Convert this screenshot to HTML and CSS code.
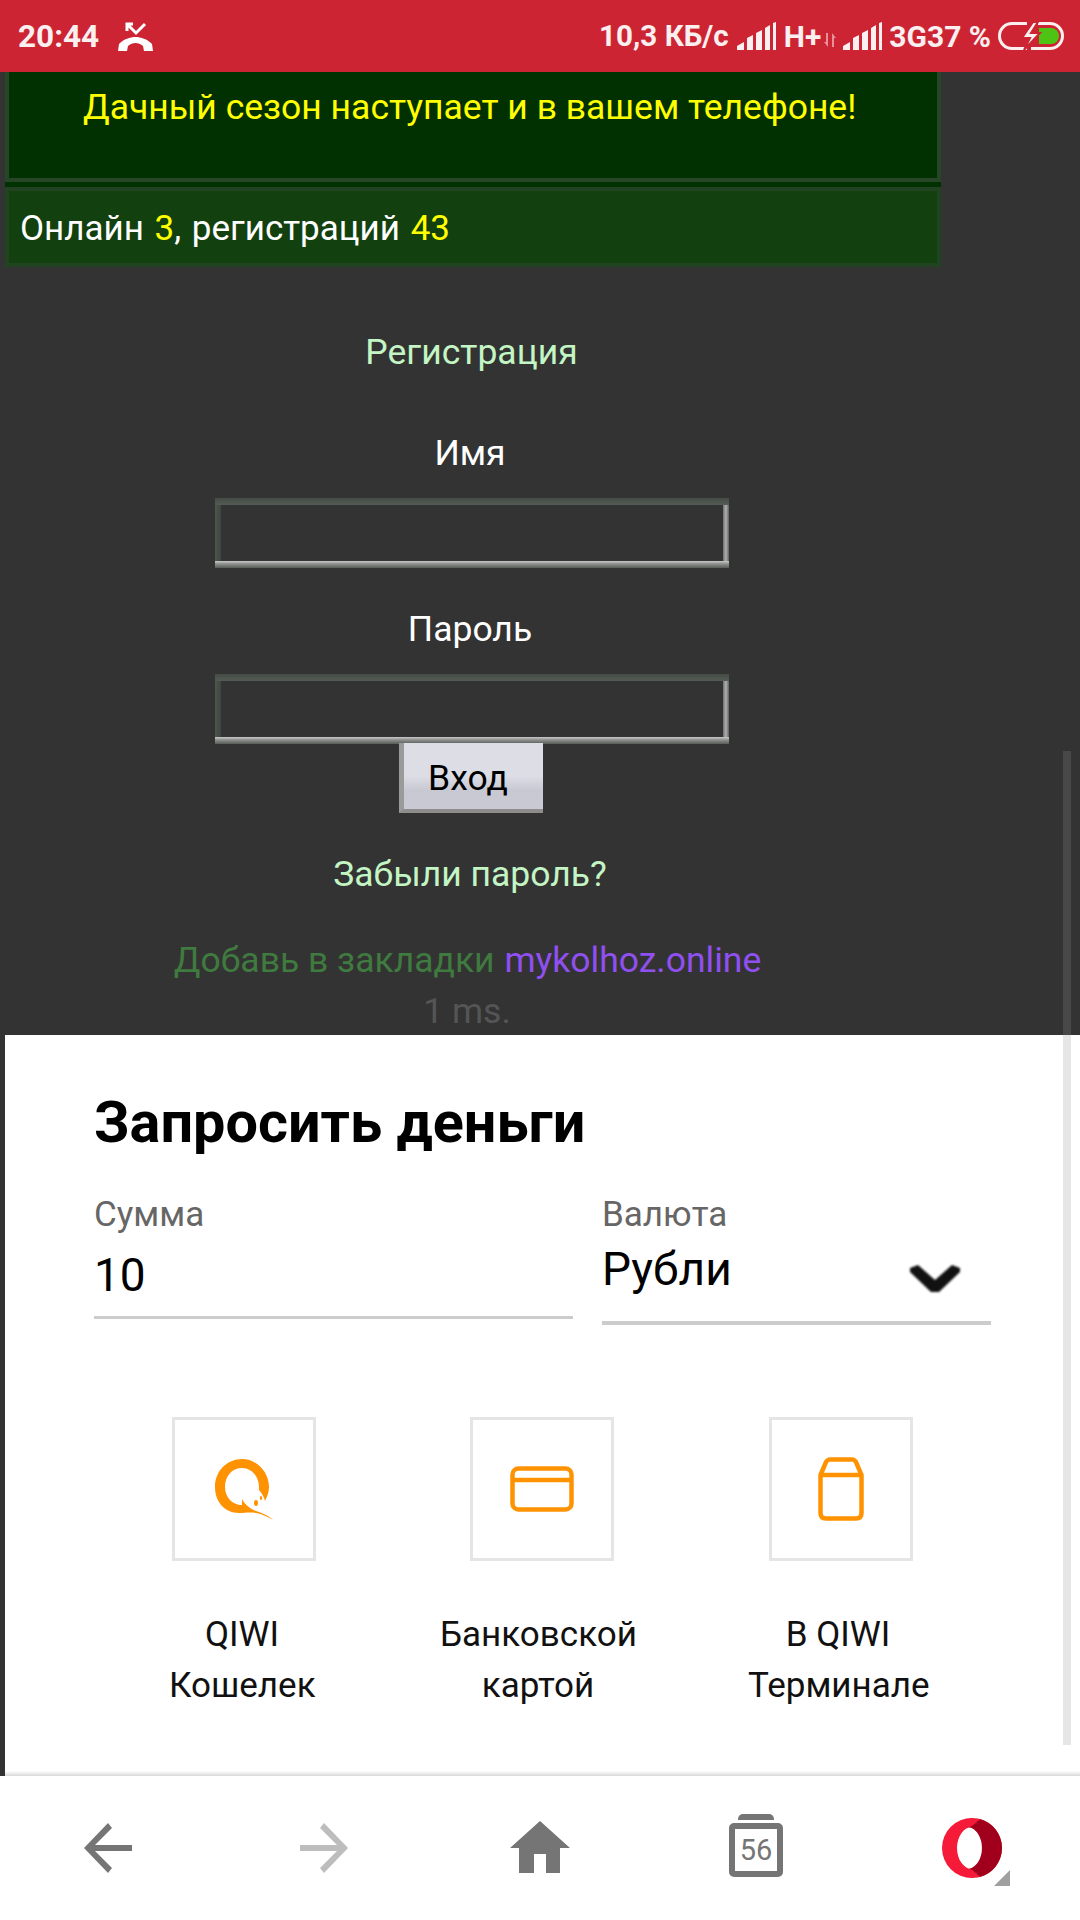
FILE: index.html
```html
<!DOCTYPE html>
<html lang="ru">
<head>
<meta charset="utf-8">
<title>Запросить деньги</title>
<link rel="stylesheet" href="styles.css">
</head>
<body>
<div class="screen">
  <header class="status">
    <span class="clock">20:44</span>
    <svg class="call-icon" viewBox="0 0 35 29"><path class="call-v" d="M9 2l9 9 9-9M9 9V2h6"/><path class="call-fill" d="M0 29l1-7c5-5 11-7 16.500-7S29 17 34 22l1 7h-9l-1-5c-2-2-5-3-7.500-3S12 22 10 24l-1 5z"/></svg>
    <div class="status-right">
      <span class="net-speed">10,3 КБ/с</span>
      <svg class="signal" viewBox="0 0 39 28"><path d="M0 28v-4l7-4v8zM10 28V16l6-3v15zM19 28V11l6-3v20zM28 28V6l5-3v25zM36 28V1l3-1v28z"/></svg>
      <span class="net-type">H+</span>
      <svg class="arrows" viewBox="0 0 12 14"><path d="M2 0h2v14L0 9h2zM8 0l4 5h-2v9H8z"/></svg>
      <svg class="signal signal-2" viewBox="0 0 39 28"><path d="M0 28v-4l7-4v8zM10 28V16l6-3v15zM19 28V11l6-3v20zM28 28V6l5-3v25zM36 28V1l3-1v28z"/></svg>
      <span class="net-type">3G37 %</span>
      <svg class="battery" viewBox="0 0 66 28"><path class="bat-line" d="M29 1.500H14a12.500 12.500 0 0 0 0 25h15M40 1.500h12a12.500 12.500 0 0 1 0 25H33"/><path class="bat-charge" d="M41 6h12a8 8 0 0 1 0 16H41z"/><path class="bat-bolt" d="M35 0L24 16h8l-6 12 16-17h-9l7-11z"/></svg>
    </div>
  </header>

  <main class="site">
    <div class="boxes">
      <div class="news">Дачный сезон наступает и в вашем телефоне!</div>
      <div class="online">Онлайн <b>3</b>, регистраций <b>43</b></div>
    </div>
    <div class="login">
      <a class="link link-reg">Регистрация</a>
      <div class="label label-name">Имя</div>
      <div class="field field-name"></div>
      <div class="label label-pass">Пароль</div>
      <div class="field field-pass"></div>
      <div class="submit">Вход</div>
      <a class="link link-forgot">Забыли пароль?</a>
      <div class="bookmark">Добавь в закладки <span class="domain">mykolhoz.online</span></div>
      <div class="timing">1 ms.</div>
    </div>
  </main>

  <section class="sheet">
    <h1 class="sheet-title">Запросить деньги</h1>
    <div class="form-row">
      <div class="col-amount">
        <div class="field-label">Сумма</div>
        <div class="amount">10</div>
      </div>
      <div class="col-currency">
        <div class="field-label">Валюта</div>
        <div class="currency">
          <span>Рубли</span>
          <svg class="chevron" viewBox="0 0 52 28"><path d="M1 3l8-3 17 15L43 0l8 3v4L30 27h-8L1 7z"/></svg>
        </div>
      </div>
    </div>
    <div class="methods">
      <div class="method method-1">
        <div class="tile">
          <svg class="pay-q" viewBox="0 0 58 61"><path class="o-fill" d="M27 0C42 0 54 13 54 28c0 5-2 10-4 14-1-4-3-8-6-11 0-1 0-2 0-3C44 17 36 9 27 9 17 9 10 17 10 28c0 10 7 18 17 18v-6c3 6 9 10 14 12 6 2 12 4 17 9-5-3-11-6-17-7-6-1-11 0-17 0C10 54 0 43 0 28 0 12 12 0 27 0z"/><ellipse class="o-fill" cx="41" cy="44" rx="2" ry="3"/><ellipse class="o-fill" cx="46" cy="39" rx="1.200" ry="2"/></svg>
        </div>
        <div class="method-name">QIWI<br>Кошелек</div>
      </div>
      <div class="method method-2">
        <div class="tile">
          <svg class="pay-card" viewBox="0 0 64 46"><rect class="o-line" x="2.500" y="2.500" width="59" height="41" rx="6"/><path class="o-line" d="M2 14h60"/></svg>
        </div>
        <div class="method-name">Банковской<br>картой</div>
      </div>
      <div class="method method-3">
        <div class="tile">
          <svg class="pay-term" viewBox="0 0 46 64"><path class="o-line" d="M2.500 18L8 5c1-1.500 2-2.500 4-2.500h22c2 0 3 1 4 2.500l5.500 13v38c0 3.500-2 5.500-5.500 5.500H8c-3.500 0-5.500-2-5.500-5.500z"/><path class="o-line" d="M2 18h42"/></svg>
        </div>
        <div class="method-name">В QIWI<br>Терминале</div>
      </div>
    </div>
    <div class="sheet-shadow"></div>
  </section>

  <nav class="nav">
    <svg class="nav-arrow" viewBox="0 0 48 50"><path d="M24 0l4 5-17 17h37v6H11l17 17-4 5L0 25z"/></svg>
    <svg class="nav-arrow nav-fwd" viewBox="0 0 48 50"><path d="M24 0l-4 5 17 17H0v6h37L20 45l4 5 24-25z"/></svg>
    <svg class="nav-home" viewBox="0 0 60 52"><path d="M30 0l30 27H50v25H36V33H24v19H9V27H0z"/></svg>
    <div class="nav-tabs">
      <div class="tabs-top"></div>
      <div class="tabs-body">56</div>
    </div>
    <div class="nav-opera">
      <svg class="opera" viewBox="0 0 60 60"><path class="op-red" fill-rule="evenodd" d="M30 0a30 30 0 1 1 0 60 30 30 0 0 1 0-60zm0 9a15 21 0 1 0 0 42 15 21 0 0 0 0-42z"/><path class="op-dark" d="M38 1.100A30 30 0 0 1 38 58.900C35 56 31 52 27 50.800A15 21 0 0 0 27 9.200C31 8 35 4 38 1.100z"/></svg>
      <svg class="op-tri" viewBox="0 0 16 16"><path d="M16 0v16H0z"/></svg>
    </div>
  </nav>
  <div class="scrollbar"></div>
</div>
</body>
</html>
```
FILE: styles.css
```css
* { box-sizing: border-box; }
html, body { margin: 0; padding: 0; }
body { width: 1080px; height: 1920px; overflow: hidden; font-family: Roboto, "Noto Sans", sans-serif; background: #333; }
.screen { position: relative; width: 1080px; height: 1920px; display: flex; flex-direction: column; }

/* status bar */
.status { height: 72px; flex: none; background: #cd2433; color: #fbeff0; display: flex; align-items: center; padding: 0 16px 0 18px; font-weight: 700; font-size: 30px; }
.clock { width: 82px; font-size: 31.500px; }
.call-icon { width: 35px; height: 29px; margin: 0 0 0 18px; }
.call-v { fill: none; stroke: #fff; stroke-width: 3; }
.call-fill { fill: #fff; }
.status-right { margin-left: auto; display: flex; align-items: center; }
.net-speed { margin-right: 8px; font-size: 29.600px; }
.signal { width: 39px; height: 28px; fill: #fbeff0; margin-right: 8px; }
.net-type { margin-right: 3px; }
.arrows { width: 12px; height: 14px; fill: #e8909a; margin: 8px 7px 0 0; }
.signal-2 { margin-right: 7px; }
.battery { width: 66px; height: 28px; margin-left: 4px; }
.bat-line { fill: none; stroke: #fbeff0; stroke-width: 3; }
.bat-charge { fill: #4dc414; }
.bat-bolt { fill: #fbeff0; stroke: #cd2433; stroke-width: 2; }

/* site */
.site { height: 963px; flex: none; background: #333; overflow: hidden; color: #fff; font-size: 35.500px; }
.boxes { width: 936px; margin-left: 5px; }
.news { height: 110px; background: #013001; border: 4px solid #274527; border-top: 0; color: #ff0; padding: 13px 0 0 74px; line-height: 44px; }
.online { height: 85px; border-top: 5px solid #013001; background: #12400f; box-shadow: inset 0 0 0 4px #214321; line-height: 84px; padding-left: 15px; font-size: 35px; word-spacing: 2px; }
.online b { font-weight: 400; color: #ff0; }
.login { width: 930px; margin-left: 5px; display: flex; flex-direction: column; align-items: center; line-height: 44px; }
.link { color: #c4f5c4; }
.link-reg { margin-top: 63px; margin-left: 3px; }
.label-name { margin-top: 57px; }
.label-pass { margin-top: 39px; }
.field { width: 514px; height: 70px; margin-top: 23px; margin-left: 4px; background:
  linear-gradient(#454b45, #555c55) top / 100% 7px no-repeat,
  linear-gradient(#c9c9c9, #8f918f 40%, #585d58) bottom / 100% 7px no-repeat,
  linear-gradient(90deg, #4d554d, #3f463f) left / 6px 100% no-repeat,
  linear-gradient(90deg, #6f726f, #b0b0b0 50%, #5c605c) right / 6px 100% no-repeat; }
.submit { width: 144px; height: 70px; margin-top: -1px; margin-left: 2px; padding-right: 11px; color: #000; line-height: 70px; text-align: center; background: linear-gradient(#dddde6 0, #dddde6 50%, #c8c8d2 72%, #cacad4 100%); border-left: 5px solid #9a9a9a; border-bottom: 4px solid #8f8c8c; }
.link-forgot { margin-top: 39px; }
.bookmark { margin-top: 42px; margin-left: -5px; color: #3f7a3f; }
.domain { color: #9050f0; margin-left: 1px; }
.timing { margin-top: 7px; color: #555; margin-left: -6px; }

/* sheet */
.sheet { position: relative; height: 741px; flex: none; margin-left: 5px; background: #fff; padding: 0 0 0 89px; }
.sheet-title { margin: 0; padding-top: 55px; font-size: 57.600px; line-height: 66px; font-weight: 700; color: #000; }
.form-row { display: flex; margin-top: 37px; }
.col-amount { width: 479px; height: 126px; border-bottom: 3px solid #ccc; }
.col-currency { width: 389px; height: 132px; margin-left: 29px; border-bottom: 4px solid #ccc; }
.field-label { font-size: 35px; line-height: 44px; color: #666; }
.amount { font-size: 46px; line-height: 60px; color: #000; margin-top: 8px; }
.currency { display: flex; justify-content: space-between; align-items: center; font-size: 46px; line-height: 60px; color: #000; margin-top: 2px; }
.chevron { width: 52px; height: 28px; margin: 20px 30px 0 0; fill: #111; filter: blur(1px); }
.methods { display: flex; margin-top: 92px; margin-left: -89px; color: #111; }
.method { width: 300px; display: flex; flex-direction: column; }
.tile { width: 144px; height: 144px; border: 3px solid #e5e5e5; display: flex; align-items: center; justify-content: center; }
.method-1 { padding-left: 167px; width: 465px; }
.method-2 { width: 299px; }
.method-3 { width: 300px; }
.method-name { font-size: 35px; line-height: 51px; text-align: center; margin-top: 48px; white-space: nowrap; }
.method-1 .method-name { width: 146px; margin-left: -3px; }
.method-2 .method-name { width: 196px; margin-left: -30px; }
.method-3 .method-name { width: 180px; margin-left: -21px; }
.o-fill { fill: #ff9200; }
.o-line { fill: none; stroke: #ff9200; stroke-width: 4.500; }
.pay-q { width: 58px; height: 61px; }
.pay-card { width: 64px; height: 46px; }
.pay-term { width: 46px; height: 64px; }
.sheet-shadow { position: absolute; left: 0; right: -5px; bottom: 0; height: 5px; background: linear-gradient(#fff, #d8d8d8); }

/* nav */
.nav { height: 144px; flex: none; background: #fff; position: relative; display: flex; align-items: flex-start; }
.nav-arrow { width: 48px; height: 50px; fill: #757575; margin: 47px 0 0 84px; }
.nav-fwd { fill: #bdbdbd; margin-left: 168px; }
.nav-home { width: 60px; height: 52px; fill: #757575; margin: 45px 0 0 162px; }
.nav-tabs { width: 54px; height: 64px; margin: 38px 0 0 159px; display: flex; flex-direction: column; align-items: center; }
.tabs-top { width: 36px; height: 6px; background: #757575; border-radius: 5px 5px 0 0; }
.tabs-body { width: 54px; height: 54px; margin-top: 3px; border: 6px solid #757575; border-radius: 5px; color: #757575; font-size: 29px; line-height: 42px; text-align: center; }
.nav-opera { width: 68px; height: 68px; margin: 42px 0 0 159px; position: relative; }
.opera { width: 60px; height: 60px; display: block; }
.op-red { fill: #f41a38; }
.op-dark { fill: #a0001c; }
.op-tri { position: absolute; left: 52px; top: 52px; width: 16px; height: 16px; fill: #a0a0a0; }

.scrollbar { position: absolute; left: 1063px; top: 751px; width: 8px; height: 994px; background: linear-gradient(#484848 0, #484848 284px, #e6e6e6 284px); }
```
